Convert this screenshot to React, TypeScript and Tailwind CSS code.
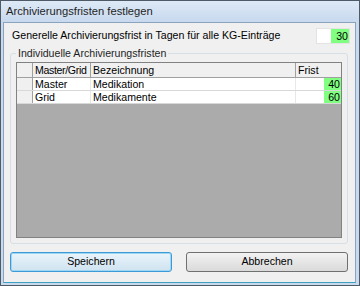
import React from "react";

const rows = [
  { master: "Master", name: "Medikation", frist: 40 },
  { master: "Grid", name: "Medikamente", frist: 60 },
];

export default function App() {
  return (
    <div
      className="w-[360px] h-[286px] flex flex-col border border-[#4e5a66] bg-[#c9daee] text-[10.6px] text-black"
      style={{ fontFamily: '"Liberation Sans", Arial, sans-serif' }}
    >
      {/* title bar */}
      <div className="h-[21px] flex items-center pl-[5px] bg-gradient-to-b from-[#dde9f6] to-[#c8d9ee] text-[11.2px] text-[#1e1e1e]">
        Archivierungsfristen festlegen
      </div>

      {/* client area */}
      <div className="flex-1 ml-[2px] mb-[2px] mr-[3px] border border-[#8aa3bf] border-b-[#3fa0c0] bg-[#f0f0f0] flex flex-col px-[6px]">
        <div className="flex items-center justify-between h-[16px] mt-[5px] pl-[2px] mr-[-1px]">
          <span>Generelle Archivierungsfrist in Tagen für alle KG-Einträge</span>
          <div className="flex w-[34px] h-[16px] border border-[#e3e3e3] bg-white">
            <div className="flex-1" />
            <div className="w-[18px] bg-[#80ff80] text-right pr-[1px] leading-[14px]">30</div>
          </div>
        </div>

        {/* group box */}
        <div className="relative mt-[9px] h-[191px] border border-[#d5dfe5] rounded-[3px] px-[5px] pt-[8px] pb-[5px] mr-[1px]">
          <span className="absolute left-[5px] top-[-8px] bg-[#f0f0f0] px-[2px] text-[#1e1e1e]">
            Individuelle Archivierungsfristen
          </span>
          <div className="h-full flex flex-col border border-[#828282] bg-[#ababab]">
            <div className="flex h-[15px] bg-[#f0f0f0] border-b border-[#a0a0a0] leading-[14px]">
              <div className="w-[16px] border-r border-[#a0a0a0]" />
              <div className="w-[58px] border-r border-[#a0a0a0] pl-[2px] tracking-[-0.35px] overflow-hidden whitespace-nowrap">Master/Grid</div>
              <div className="w-[205px] border-r border-[#a0a0a0] pl-[2px]">Bezeichnung</div>
              <div className="flex-1 pl-[2px]">Frist</div>
            </div>
            {rows.map((r) => (
              <div key={r.master} className="flex h-[13px] bg-white border-b border-[#d8d8d8] leading-[12px]">
                <div className="w-[16px] bg-[#f0f0f0] border-r border-[#a0a0a0]" />
                <div className="w-[58px] border-r border-[#e8e8e8] pl-[2px]">{r.master}</div>
                <div className="w-[205px] border-r border-[#e8e8e8] pl-[2px]">{r.name}</div>
                <div className="flex-1 flex justify-end">
                  <span className="w-[17px] bg-[#80ff80] text-right pr-[1px]">{r.frist}</span>
                </div>
              </div>
            ))}
            <div className="flex-1" />
          </div>
        </div>

        {/* buttons */}
        <div className="flex justify-between mt-[8px] pr-[1px]">
          <button className="w-[162px] h-[20px] rounded-[3px] border border-[#3c9ad6] bg-gradient-to-b from-[#eaf4fb] to-[#cfe3f0] shadow-[inset_0_0_0_1px_#9fd6f3]">
            Speichern
          </button>
          <button className="w-[162px] h-[20px] rounded-[3px] border border-[#707070] bg-gradient-to-b from-[#f2f2f2] to-[#dadada]">
            Abbrechen
          </button>
        </div>
      </div>
    </div>
  );
}
